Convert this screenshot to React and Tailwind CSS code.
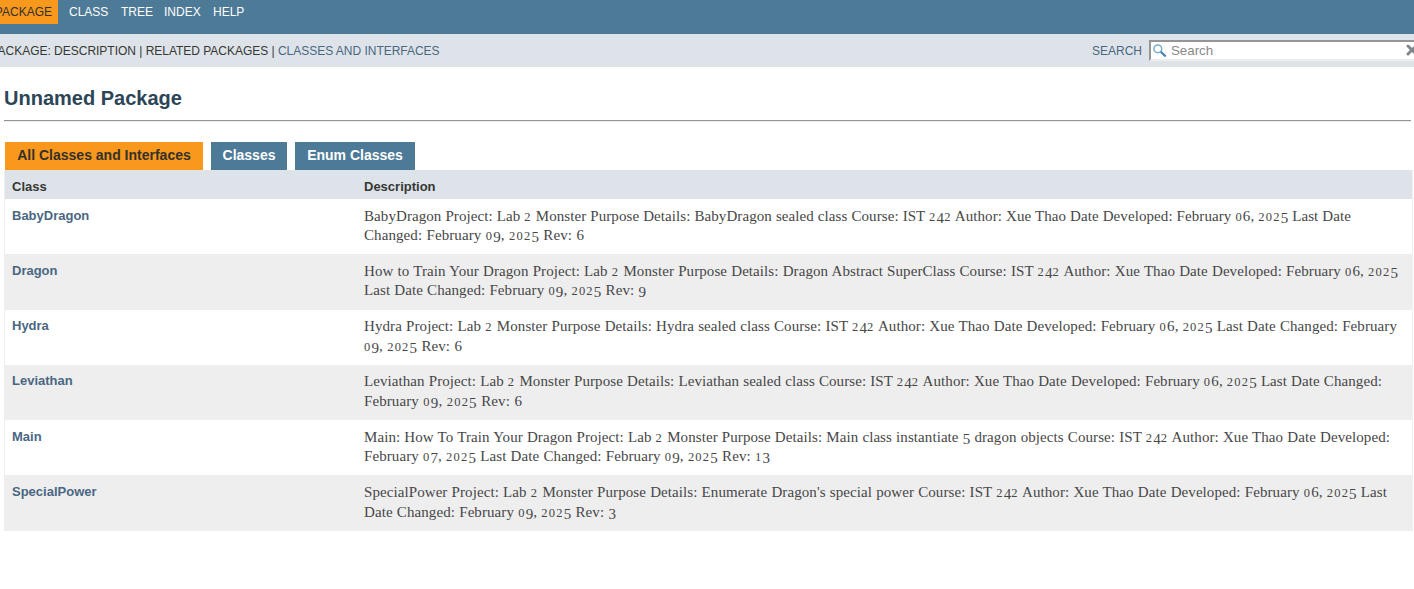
import React from 'react';
import { X } from 'lucide-react';

const rows = [
  ['BabyDragon', [
    ['BabyDragon Project: Lab 2 Monster Purpose Details: BabyDragon sealed class Course: IST 242 Author: Xue Thao Date Developed: February 06, 2025 Last Date', 987],
    ['Changed: February 09, 2025 Rev: 6', 220]]],
  ['Dragon', [
    ['How to Train Your Dragon Project: Lab 2 Monster Purpose Details: Dragon Abstract SuperClass Course: IST 242 Author: Xue Thao Date Developed: February 06, 2025', 1034],
    ['Last Date Changed: February 09, 2025 Rev: 9', 282]]],
  ['Hydra', [
    ['Hydra Project: Lab 2 Monster Purpose Details: Hydra sealed class Course: IST 242 Author: Xue Thao Date Developed: February 06, 2025 Last Date Changed: February', 1033],
    ['09, 2025 Rev: 6', 98]]],
  ['Leviathan', [
    ['Leviathan Project: Lab 2 Monster Purpose Details: Leviathan sealed class Course: IST 242 Author: Xue Thao Date Developed: February 06, 2025 Last Date Changed:', 1018],
    ['February 09, 2025 Rev: 6', 158]]],
  ['Main', [
    ['Main: How To Train Your Dragon Project: Lab 2 Monster Purpose Details: Main class instantiate 5 dragon objects Course: IST 242 Author: Xue Thao Date Developed:', 1026],
    ['February 07, 2025 Last Date Changed: February 09, 2025 Rev: 13', 406]]],
  ['SpecialPower', [
    ["SpecialPower Project: Lab 2 Monster Purpose Details: Enumerate Dragon's special power Course: IST 242 Author: Xue Thao Date Developed: February 06, 2025 Last", 1023],
    ['Date Changed: February 09, 2025 Rev: 3', 252]]],
];

// Old-style figures: 0-2 sit at x-height, 3/4/5/7/9 hang below the baseline.
function OldStyle({ text }) {
  return text.split(/([012]+|[34579]+)/).map((part, i) => {
    if (/^[012]/.test(part)) return <span key={i} className="text-[12.5px] leading-none tracking-[1.2px]">{part}</span>;
    if (/^[34579]/.test(part)) return <span key={i} className="relative top-[2px] leading-none">{part}</span>;
    return part;
  });
}

function Line({ text, width }) {
  return (
    <div
      className="h-[19.6px] whitespace-nowrap text-justify [text-align-last:justify]"
      style={{ width }}
    >
      <OldStyle text={text} />
    </div>
  );
}

export default function App() {
  return (
    <div className="h-[589px] w-[1414px] overflow-hidden bg-white font-['Liberation_Sans',Arial,sans-serif] text-[#353833]">
      <nav className="flex h-[34px] items-start bg-[#4d7a97] text-[12px] leading-6 text-white">
        <div className="flex h-6 w-[58px] justify-end bg-[#f8981d] pr-[6px] text-[#33312a]">PACKAGE</div>
        <a className="ml-[11px] w-[52px]">CLASS</a>
        <a className="w-[43px]">TREE</a>
        <a className="w-[49px]">INDEX</a>
        <a>HELP</a>
      </nav>
      <div className="flex h-[33px] items-center justify-between bg-[#dee3e9] text-[12px]">
        <div className="-ml-[9.5px] whitespace-nowrap tracking-[-0.02px]">
          PACKAGE: DESCRIPTION | RELATED PACKAGES | <a className="text-[#4a6782]">CLASSES AND INTERFACES</a>
        </div>
        <div className="flex items-center text-[#4a6782]">
          <label className="w-[57px]">SEARCH</label>
          <div className="flex h-[21px] w-[265px] items-center border-2 border-r-0 border-[#959595] border-b-[#eeeeee] bg-white text-[13.3px] text-[#8a8a8a]">
            <svg className="ml-px h-4 w-4 shrink-0" viewBox="0 0 16 16" fill="none">
              <circle cx="5.8" cy="5.8" r="3.9" stroke="#79adcb" strokeWidth="1.5" />
              <path d="M8.8 8.8L13.7 13.5" stroke="#3f83ad" strokeWidth="2.2" />
            </svg>
            <span className="ml-[3px] grow">Search</span>
            <X className="-mr-[6px] mb-px h-4 w-4 shrink-0 text-[#80868a]" strokeWidth={4.5} />
          </div>
        </div>
      </div>
      <main className="px-1 pt-[19px]">
        <h1 className="h-[34px] text-[20px] font-bold leading-6 text-[#2c4557]">Unnamed Package</h1>
        <hr className="mr-[-1px] h-[2px] w-[1407px] border-0 border-t border-[#959595] bg-[#eeeeee]" />
        <div className="ml-px mt-5 flex h-7 gap-2 text-[14px] font-bold leading-[26px] text-white">
          <button className="flex w-[198px] justify-center bg-[#f8981d] text-[#33312a]">All Classes and Interfaces</button>
          <button className="flex w-[76px] justify-center bg-[#4d7a97]">Classes</button>
          <button className="flex w-[120px] justify-center bg-[#4d7a97]">Enum Classes</button>
        </div>
        <div className="w-[1409px] border-x border-[#eeeeee]">
          <div className="grid h-[29px] grid-cols-[352px_1fr] bg-[#dee3e9] pl-[7px] text-[13px] font-bold leading-[33px]">
            <div>Class</div>
            <div>Description</div>
          </div>
          {rows.map(([name, lines]) => (
            <div key={name} className="grid h-[55.3px] grid-cols-[352px_1fr] pl-[7px] pt-[7.5px] even:bg-white odd:bg-[#eeeeef]">
              <a className="text-[13px] font-bold leading-[17px] text-[#4a6782]">{name}</a>
              <div className="font-['Liberation_Serif',Georgia,serif] text-[15px] leading-[19.6px] tracking-[0.08px] text-[#474747]">
                {lines.map(([text, width]) => <Line key={text} text={text} width={width} />)}
              </div>
            </div>
          ))}
        </div>
      </main>
    </div>
  );
}
